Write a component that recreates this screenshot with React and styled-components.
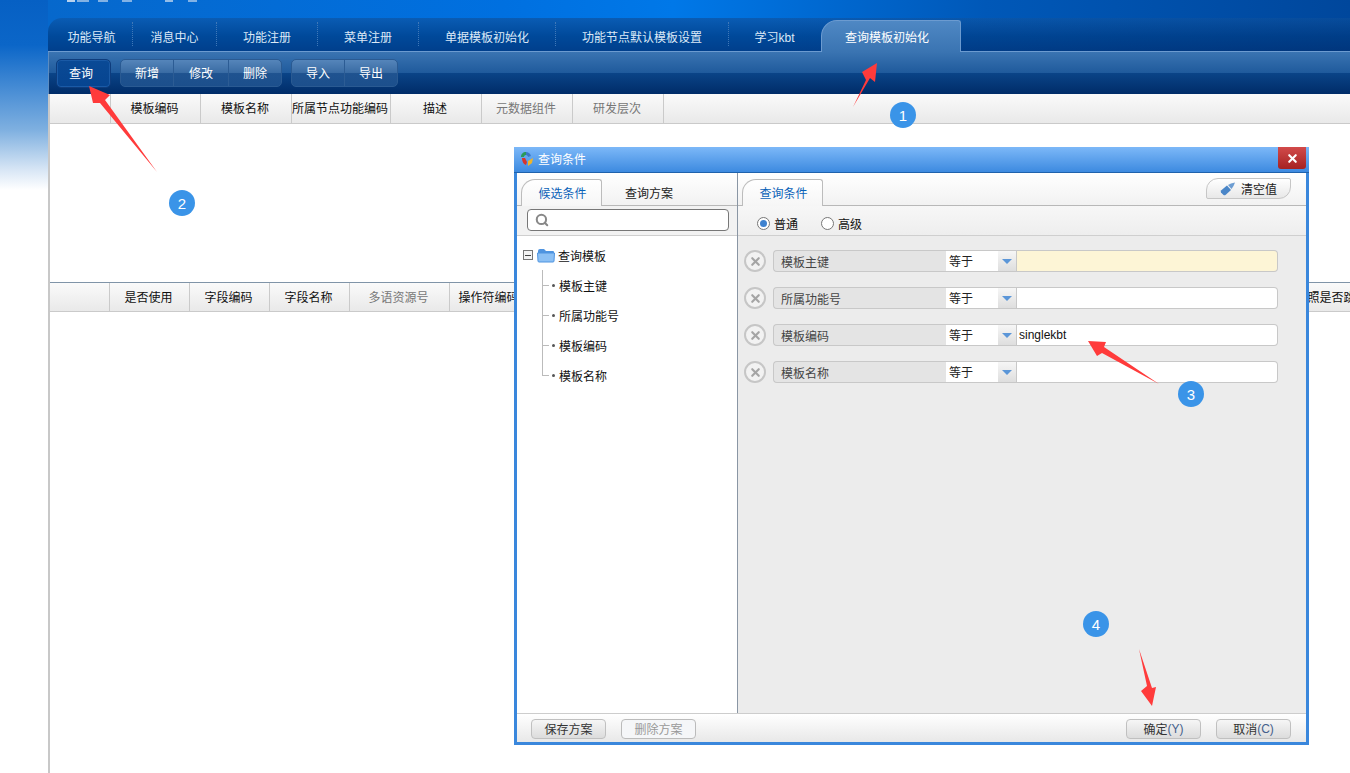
import React from 'react';
import styled, { createGlobalStyle } from 'styled-components';
import { Search, X } from 'lucide-react';

const GlobalStyle = createGlobalStyle`
  html, body {
    margin: 0;
    padding: 0;
    height: 100%;
    overflow: hidden;
    background: #fff;
  }
  body {
    font-family: "Liberation Sans", "Noto Sans CJK SC", sans-serif;
    font-size: 12px;
    color: #111;
  }
  * { box-sizing: border-box; }
`;

const Page = styled.div`
  position: relative;
  display: flex;
  width: 1350px;
  height: 773px;
  overflow: hidden;
  background: #fff;
`;

const Gutter = styled.div`
  flex: 0 0 48px;
  background: linear-gradient(180deg, #0660c4 0, #0b66c8 45px, #7fb0e0 130px, #d8e6f5 170px, #fff 190px);
`;

const Main = styled.div`
  flex: 1;
  min-width: 0;
  display: flex;
  flex-direction: column;
  background: linear-gradient(180deg, #0668cc 36px, #fff 36px);
`;

const TopBand = styled.div`
  height: 18px;
  flex: none;
  background: linear-gradient(90deg, #0668cc 0, #0070e0 35%, #0078e8 48%, #0058b8 72%, #00479c 100%);
`;

const LogoEdge = styled.svg`
  display: block;
  margin-left: 19px;
`;

const TabBar = styled.div`
  height: 34px;
  flex: none;
  display: flex;
  align-items: flex-end;
  border-top-left-radius: 14px;
  border-bottom: 1px solid #6c9bd0;
  background:
    linear-gradient(90deg, transparent 55%, rgba(0, 20, 70, 0.22) 100%),
    linear-gradient(180deg, #0a5cb4 0, #00499a 55%, #003f8c 100%);
`;

const Tab = styled.div`
  flex: 0 0 ${(p) => p.$width}px;
  height: 24px;
  margin-bottom: 5px;
  padding: 4px 0 0 ${(p) => p.$inset || 0}px;
  display: flex;
  align-items: center;
  justify-content: center;
  color: #dce9f7;
  border-right: 1px dotted ${(p) => (p.$plain ? 'transparent' : '#3f78b8')};
`;

const ActiveTab = styled.div`
  flex: 0 0 140px;
  height: 32px;
  margin-bottom: -1px;
  padding-right: 8px;
  display: flex;
  align-items: center;
  justify-content: center;
  color: #fff;
  border: 1px solid #6c9bd0;
  border-bottom: none;
  border-radius: 16px 3px 0 0;
  background: linear-gradient(180deg, #4f88c4 0, #3a74b2 100%);
`;

const Toolbar = styled.div`
  height: 42px;
  flex: none;
  display: flex;
  align-items: flex-start;
  gap: 9px;
  padding: 7px 0 0 7px;
  border-left: 1px solid #5c8cc0;
  background: linear-gradient(180deg, #3a74b2 0, #1f5a9c 50%, #0a4488 50%, #002c68 100%);
`;

const ButtonGroup = styled.div`
  display: flex;
  height: 28px;
  border: 1px solid #2a5a92;
  border-radius: 5px;
  overflow: hidden;
  background: linear-gradient(180deg, #5585ba 0, #3a6ca4 48%, #1f5390 52%, #1c4f8c 100%);
`;

const ToolButton = styled.div`
  width: ${(p) => p.$width}px;
  padding-bottom: 2px;
  display: flex;
  align-items: center;
  justify-content: center;
  color: #fff;
  border-left: ${(p) => (p.$first ? 'none' : '1px solid #2c5c94')};
`;

const PressedButton = styled.div`
  width: 55px;
  height: 29px;
  padding: 0 5px 2px 0;
  display: flex;
  align-items: center;
  justify-content: center;
  color: #fff;
  border: 1px solid #0e3c7c;
  border-radius: 5px;
  background: linear-gradient(180deg, #0a4a96 0, #064490 100%);
  box-shadow: inset 0 0 0 1px #1a5aa6;
`;

const Content = styled.div`
  flex: 1;
  display: flex;
  flex-direction: column;
  border-left: 2px solid #c8c8c8;
  background: #fff;
`;

const GridHeader = styled.div`
  height: 30px;
  flex: none;
  display: flex;
  overflow: hidden;
  border-top: ${(p) => (p.$lined ? '1px solid #8094a8' : 'none')};
  border-bottom: 1px solid #cacaca;
  background: linear-gradient(180deg, #fafafa 0, #e9e9e9 100%);
`;

const Column = styled.div`
  flex: 0 0 ${(p) => p.$width}px;
  padding: 0 2px 2px 0;
  display: flex;
  align-items: center;
  justify-content: center;
  white-space: nowrap;
  color: ${(p) => (p.$muted ? '#777' : '#111')};
  border-right: 1px solid #cacaca;
`;

const GridBody = styled.div`
  height: 158px;
  flex: none;
`;

const Dialog = styled.div`
  position: absolute;
  left: 514px;
  top: 147px;
  width: 795px;
  height: 598px;
  display: flex;
  flex-direction: column;
  border: 3px solid #3a87dc;
  border-top: none;
  background: #fff;
`;

const TitleBar = styled.div`
  height: 26px;
  margin: 0 -3px;
  flex: none;
  display: flex;
  align-items: flex-start;
  justify-content: space-between;
  padding-left: 6px;
  background: linear-gradient(180deg, #7cb8f8 0, #3d8ae0 100%);
  border-bottom: 1px solid #1f62ac;
`;

const TitleLabel = styled.div`
  display: flex;
  align-items: center;
  gap: 4px;
  height: 23px;
  color: #fff;
`;

const CloseButton = styled.div`
  width: 28px;
  height: 22px;
  margin-right: 3px;
  display: flex;
  align-items: center;
  justify-content: center;
  color: #fff;
  border-radius: 0 0 3px 3px;
  background: linear-gradient(180deg, #d24a4a 0, #a52222 100%);
`;

const Panels = styled.div`
  flex: 1;
  min-height: 0;
  display: flex;
`;

const LeftPanel = styled.div`
  flex: 0 0 221px;
  display: flex;
  flex-direction: column;
  border-right: 1px solid #8a96a4;
`;

const RightPanel = styled.div`
  flex: 1;
  min-width: 0;
  display: flex;
  flex-direction: column;
  background: #ececec;
`;

const TabStrip = styled.div`
  height: 33px;
  flex: none;
  display: flex;
  align-items: flex-end;
  justify-content: space-between;
  padding: 0 15px 0 4px;
  border-bottom: 1px solid #b8b8b8;
  background: linear-gradient(180deg, #fff 0, #f2f2f2 100%);
`;

const StripTabs = styled.div`
  display: flex;
  align-items: flex-end;
`;

const PanelTab = styled.div`
  width: ${(p) => p.$width}px;
  height: 27px;
  margin-bottom: -1px;
  padding: 0 0 2px ${(p) => (p.$active ? 2 : 0)}px;
  display: flex;
  align-items: center;
  justify-content: center;
  color: ${(p) => (p.$active ? '#0a62b8' : '#222')};
  background: ${(p) => (p.$active ? 'linear-gradient(180deg, #fff 0, #f6f6f6 100%)' : 'transparent')};
  border: 1px solid ${(p) => (p.$active ? '#bcbcbc' : 'transparent')};
  border-bottom: none;
  border-radius: 14px 3px 0 0;
`;

const ClearButton = styled.div`
  width: 85px;
  height: 21px;
  align-self: flex-start;
  margin-top: 5px;
  display: flex;
  align-items: center;
  justify-content: center;
  gap: 5px;
  color: #222;
  border: 1px solid #c6c6c6;
  border-radius: 12px 2px 12px 2px;
  background: linear-gradient(180deg, #fff 0, #e8e8e8 100%);
`;

const SearchRow = styled.div`
  height: 30px;
  flex: none;
  padding: 3px 8px 0 10px;
  border-bottom: 1px solid #cfcfcf;
  background: #f2f2f2;
`;

const SearchBox = styled.div`
  height: 22px;
  display: flex;
  align-items: center;
  padding-left: 7px;
  color: #888;
  background: #fff;
  border: 1px solid #777;
  border-radius: 4px;
`;

const Tree = styled.div`
  flex: 1;
  padding: 4px 0 0 6px;
  background: #fff;
`;

const TreeRoot = styled.div`
  height: 30px;
  display: flex;
  align-items: center;
`;

const ExpandBox = styled.span`
  width: 10px;
  height: 10px;
  margin-right: 4px;
  display: flex;
  align-items: center;
  justify-content: center;
  border: 1px solid #777;
  background: #f4f4f4;

  &::after {
    content: '';
    width: 6px;
    height: 1px;
    background: #444;
  }
`;

const FolderIcon = styled.svg`
  margin-right: 3px;
`;

const TreeRow = styled.div`
  height: 30px;
  display: flex;
  align-items: center;
  padding-left: 19px;
`;

const Connector = styled.span`
  width: 8px;
  height: 30px;
  background:
    linear-gradient(#bbb, #bbb) left top / 1px ${(p) => (p.$last ? '50%' : '100%')} no-repeat,
    linear-gradient(#bbb, #bbb) left center / 7px 1px no-repeat;
`;

const TreeDot = styled.span`
  width: 3px;
  height: 3px;
  margin: 0 4px 0 2px;
  border-radius: 50%;
  background: #555;
`;

const RadioRow = styled.div`
  height: 30px;
  flex: none;
  display: flex;
  align-items: center;
  padding: 5px 0 0 19px;
  border-bottom: 1px solid #cfcfcf;
  background: linear-gradient(180deg, #f7f7f7 0, #eeeeee 100%);
`;

const RadioOption = styled.label`
  display: flex;
  align-items: center;
  gap: 4px;
  margin-right: 23px;
  color: #111;
`;

const RadioDot = styled.span`
  width: 13px;
  height: 13px;
  display: flex;
  align-items: center;
  justify-content: center;
  border-radius: 50%;
  border: 1px solid #777;
  background: #fff;

  &::after {
    content: '';
    width: 7px;
    height: 7px;
    border-radius: 50%;
    background: ${(p) => (p.$checked ? '#3f82cf' : 'transparent')};
  }
`;

const Conditions = styled.div`
  flex: 1;
  display: flex;
  flex-direction: column;
  gap: 15px;
  padding: 14px 0 0 6px;
`;

const ConditionRow = styled.div`
  height: 22px;
  display: flex;
  align-items: center;
`;

const RemoveButton = styled.span`
  width: 22px;
  height: 22px;
  margin-right: 7px;
  display: flex;
  align-items: center;
  justify-content: center;
  color: #a4a4a4;
  border-radius: 50%;
  border: 2px solid #c6c6c6;
  background: #f2f2f2;
`;

const FieldLabel = styled.div`
  width: 173px;
  height: 22px;
  display: flex;
  align-items: center;
  padding-left: 7px;
  color: #444;
  border: 1px solid #c8c8c8;
  border-right: none;
  border-radius: 4px 0 0 4px;
  background: #e4e4e4;
`;

const OperatorValue = styled.div`
  width: 52px;
  height: 22px;
  display: flex;
  align-items: center;
  padding: 0 0 2px 3px;
  color: #222;
  background: #fff;
  border-top: 1px solid #c8c8c8;
  border-bottom: 1px solid #c8c8c8;
`;

const OperatorArrow = styled.div`
  width: 19px;
  height: 22px;
  display: flex;
  align-items: center;
  justify-content: center;
  border: 1px solid #c8c8c8;
  border-width: 1px 1px 1px 0;
  background: linear-gradient(180deg, #f6f6f6 0, #dedede 100%);

  &::after {
    content: '';
    border-style: solid;
    border-width: 5px 5px 0 5px;
    border-color: #5b96d8 transparent transparent transparent;
  }
`;

const ValueInput = styled.div`
  width: 261px;
  height: 22px;
  display: flex;
  align-items: center;
  padding-left: 2px;
  color: #111;
  border: 1px solid #c8c8c8;
  border-left: none;
  border-radius: 0 4px 4px 0;
  background: ${(p) => (p.$required ? '#fdf5d6' : '#fff')};
`;

const Footer = styled.div`
  height: 29px;
  flex: none;
  display: flex;
  align-items: center;
  justify-content: space-between;
  padding: 1px 15px 0 14px;
  border-top: 1px solid #cdcdcd;
  background: linear-gradient(180deg, #fff 0, #e8e8e8 100%);
`;

const FooterGroup = styled.div`
  display: flex;
  gap: 15px;
`;

const FooterButton = styled.div`
  width: 75px;
  height: 20px;
  display: flex;
  align-items: center;
  justify-content: center;
  color: ${(p) => (p.$disabled ? '#999' : '#333')};
  border: 1px solid ${(p) => (p.$disabled ? '#bbb' : '#c0c0c0')};
  border-radius: 4px;
  background: ${(p) => (p.$disabled ? '#f5f6f8' : 'linear-gradient(180deg, #f6f6f6 0, #dcdcdc 100%)')};
`;

const Shortcut = styled.span`
  color: #44608c;
`;

const Annotations = styled.svg`
  position: absolute;
  left: 0;
  top: 0;
  pointer-events: none;
`;

const Badge = styled.div`
  position: absolute;
  left: ${(p) => p.$x - 13}px;
  top: ${(p) => p.$y - 13}px;
  width: 26px;
  height: 26px;
  display: flex;
  align-items: center;
  justify-content: center;
  color: #fff;
  font-size: 15px;
  border-radius: 50%;
  background: #3a94e8;
`;

const topTabs = [
  ['功能导航', 85, 3],
  ['消息中心', 84],
  ['功能注册', 101],
  ['菜单注册', 101],
  ['单据模板初始化', 137],
  ['功能节点默认模板设置', 173],
];

const templateColumns = [
  ['', 61],
  ['模板编码', 90],
  ['模板名称', 91],
  ['所属节点功能编码', 98],
  ['描述', 91],
  ['元数据组件', 91, true],
  ['研发层次', 91, true],
];

const fieldColumns = [
  ['', 60],
  ['是否使用', 80],
  ['字段编码', 80],
  ['字段名称', 80],
  ['多语资源号', 100, true],
  ['操作符编码', 80],
  ['', 753],
  ['参照是否跳转', 100],
];

const treeItems = ['模板主键', '所属功能号', '模板编码', '模板名称'];

const conditions = [
  { name: '模板主键', required: true },
  { name: '所属功能号' },
  { name: '模板编码', value: 'singlekbt' },
  { name: '模板名称' },
];

const arrows = [
  '853,107 866,80 862,72 877,63 875,82 870,78',
  '89,86 110,95 105,100 157,172 100,103 93,103',
  '1088,341 1106,342 1104,347 1159,384 1102,353 1097,356',
  '1139,649 1152,688 1156,687 1152,706 1141,691 1147,686',
];

function LogoStrip() {
  // only the bottom edge of the product logo is left on screen
  return (
    <LogoEdge width="140" height="3" fill="#b8d2ee">
      <rect x="0" width="8" height="2" />
      <rect x="10" width="12" height="2" opacity="0.7" />
      <rect x="31" width="10" height="2" opacity="0.7" />
      <rect x="55" width="10" height="2" opacity="0.7" />
      <rect x="98" width="8" height="2" opacity="0.8" />
      <rect x="121" width="9" height="2" opacity="0.7" />
    </LogoEdge>
  );
}

function TitleIcon() {
  return (
    <svg width="14" height="16" viewBox="0 0 14 16">
      <path d="M1 6 C1 3 3 1 6 1 L6 4 C4.500 4 4 5 4 6 Z" fill="#2a9a5a" />
      <path d="M6 1 C8 1 10 2 11 5 L8 6 C8 5 7 4 6 4 Z" fill="#3a78c8" />
      <path d="M2 7 L5 7 L7 11 L6 14 C3 13 2 10 2 7 Z" fill="#d8342c" />
      <path d="M8 10 L13 7 L12 12 L8 15 Z" fill="#f0b428" />
    </svg>
  );
}

function FolderGlyph() {
  return (
    <FolderIcon width="18" height="15" viewBox="0 0 18 15">
      <path d="M1 3 Q1 1 3 1 L7 1 L9 3 L16 3 Q17 3 17 4 L17 5 L1 5 Z" fill="#4f94e0" />
      <path d="M0.500 5 L17.500 5 L17 13 Q17 14 16 14 L2 14 Q1 14 1 13 Z" fill="#8cc0f4" stroke="#4f94e0" strokeWidth="1" />
    </FolderIcon>
  );
}

function BrushIcon() {
  return (
    <svg width="16" height="14" viewBox="0 0 16 14">
      <path d="M1 8.500 L7 3.500 L11 8 L5.500 13 Q4.500 13.500 3.500 13 L1 10.500 Q0.500 9.500 1 8.500 Z" fill="#4a86c8" />
      <path d="M8 3 L11 1.500 L15 0.500 L13.500 4 L11.500 7 Z" fill="#4a86c8" opacity="0.8" />
    </svg>
  );
}

function HeaderCells({ columns }) {
  return columns.map(([label, width, muted], i) => (
    <Column key={i} $width={width} $muted={muted}>{label}</Column>
  ));
}

export default function App() {
  return (
    <Page>
      <GlobalStyle />
      <Gutter />
      <Main>
        <TopBand>
          <LogoStrip />
        </TopBand>
        <TabBar>
          {topTabs.map(([label, width, inset]) => (
            <Tab key={label} $width={width} $inset={inset}>{label}</Tab>
          ))}
          <Tab $width={92} $plain>学习kbt</Tab>
          <ActiveTab>查询模板初始化</ActiveTab>
        </TabBar>
        <Toolbar>
          <PressedButton>查询</PressedButton>
          <ButtonGroup>
            <ToolButton $width={52} $first>新增</ToolButton>
            <ToolButton $width={55}>修改</ToolButton>
            <ToolButton $width={53}>删除</ToolButton>
          </ButtonGroup>
          <ButtonGroup>
            <ToolButton $width={52} $first>导入</ToolButton>
            <ToolButton $width={53}>导出</ToolButton>
          </ButtonGroup>
        </Toolbar>
        <Content>
          <GridHeader>
            <HeaderCells columns={templateColumns} />
          </GridHeader>
          <GridBody />
          <GridHeader $lined>
            <HeaderCells columns={fieldColumns} />
          </GridHeader>
        </Content>
      </Main>

      <Dialog>
        <TitleBar>
          <TitleLabel>
            <TitleIcon />
            查询条件
          </TitleLabel>
          <CloseButton>
            <X size={13} strokeWidth={4} />
          </CloseButton>
        </TitleBar>
        <Panels>
          <LeftPanel>
            <TabStrip>
              <StripTabs>
                <PanelTab $width={81} $active>候选条件</PanelTab>
                <PanelTab $width={94}>查询方案</PanelTab>
              </StripTabs>
            </TabStrip>
            <SearchRow>
              <SearchBox>
                <Search size={14} strokeWidth={3.5} />
              </SearchBox>
            </SearchRow>
            <Tree>
              <TreeRoot>
                <ExpandBox />
                <FolderGlyph />
                查询模板
              </TreeRoot>
              {treeItems.map((item, i) => (
                <TreeRow key={item}>
                  <Connector $last={i === treeItems.length - 1} />
                  <TreeDot />
                  {item}
                </TreeRow>
              ))}
            </Tree>
          </LeftPanel>
          <RightPanel>
            <TabStrip>
              <StripTabs>
                <PanelTab $width={81} $active>查询条件</PanelTab>
              </StripTabs>
              <ClearButton>
                <BrushIcon />
                清空值
              </ClearButton>
            </TabStrip>
            <RadioRow>
              <RadioOption>
                <RadioDot $checked />
                普通
              </RadioOption>
              <RadioOption>
                <RadioDot />
                高级
              </RadioOption>
            </RadioRow>
            <Conditions>
              {conditions.map((c) => (
                <ConditionRow key={c.name}>
                  <RemoveButton>
                    <X size={13} strokeWidth={4} />
                  </RemoveButton>
                  <FieldLabel>{c.name}</FieldLabel>
                  <OperatorValue>等于</OperatorValue>
                  <OperatorArrow />
                  <ValueInput $required={c.required}>{c.value}</ValueInput>
                </ConditionRow>
              ))}
            </Conditions>
          </RightPanel>
        </Panels>
        <Footer>
          <FooterGroup>
            <FooterButton>保存方案</FooterButton>
            <FooterButton $disabled>删除方案</FooterButton>
          </FooterGroup>
          <FooterGroup>
            <FooterButton>确定<Shortcut>(Y)</Shortcut></FooterButton>
            <FooterButton>取消<Shortcut>(C)</Shortcut></FooterButton>
          </FooterGroup>
        </Footer>
      </Dialog>

      <Annotations width="1350" height="773" fill="#ff3b3b">
        {arrows.map((points) => (
          <polygon key={points} points={points} />
        ))}
      </Annotations>
      <Badge $x={903} $y={115}>1</Badge>
      <Badge $x={182} $y={203}>2</Badge>
      <Badge $x={1191} $y={394}>3</Badge>
      <Badge $x={1096} $y={624}>4</Badge>
    </Page>
  );
}
